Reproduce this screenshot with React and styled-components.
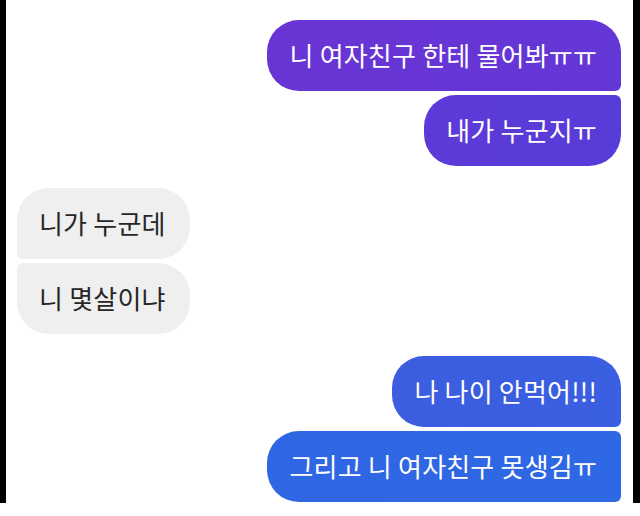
import React from "react";
import styled, { createGlobalStyle } from "styled-components";

const GlobalStyle = createGlobalStyle`
  html, body {
    margin: 0;
    padding: 0;
    background: #fff;
  }
  body {
    font-family: "Noto Sans CJK KR", "Noto Sans", sans-serif;
  }
`;

const Frame = styled.div`
  width: 640px;
  height: 516px;
  box-sizing: border-box;
  background: #fff;
  padding-bottom: 13px;
`;

const Screen = styled.div`
  height: 503px;
  box-sizing: border-box;
  border-left: 6px solid #000;
  border-right: 7px solid #000;
  padding-top: 20px;
  display: flex;
  flex-direction: column;
  gap: 22px;
  overflow: hidden;
`;

const Group = styled.div`
  display: flex;
  flex-direction: column;
  gap: 4px;
  align-items: ${(p) => (p.$mine ? "flex-end" : "flex-start")};
  padding: ${(p) => (p.$mine ? "0 12px 0 0" : "0 0 0 11px")};
`;

const radius = (mine, pos) => {
  const big = "32px";
  const small = "6px";
  if (mine) {
    const tr = pos === "first" ? big : small;
    const br = pos === "last" ? big : small;
    return `${big} ${tr} ${br} ${big}`;
  }
  const tl = pos === "first" ? big : small;
  const bl = pos === "last" ? big : small;
  return `${tl} ${big} ${big} ${bl}`;
};

const Bubble = styled.div`
  height: 71px;
  box-sizing: border-box;
  display: flex;
  align-items: center;
  padding: 0 24px 2px 22px;
  font-size: 26px;
  letter-spacing: 0.2px;
  white-space: nowrap;
  color: ${(p) => (p.$mine ? "#fff" : "#262626")};
  background: ${(p) => p.$bg};
  border-radius: ${(p) => radius(p.$mine, p.$pos)};
`;

// the last group continues below the cropped screen
const groups = [
  {
    mine: true,
    msgs: [
      { text: "니 여자친구 한테 물어봐ㅠㅠ", bg: "linear-gradient(90deg, #6a34d4, #6337d6)" },
      { text: "내가 누군지ㅠ", bg: "linear-gradient(90deg, #5d3ad7, #583cd8)" },
    ],
  },
  {
    mine: false,
    msgs: [
      { text: "니가 누군데", bg: "#efefef" },
      { text: "니 몇살이냐", bg: "#efefef" },
    ],
  },
  {
    mine: true,
    continues: true,
    msgs: [
      { text: "나 나이 안먹어!!!", bg: "linear-gradient(90deg, #3c5ddf, #3a5fe0)" },
      { text: "그리고 니 여자친구 못생김ㅠ", bg: "linear-gradient(90deg, #2f66e3, #2f68e4)" },
    ],
  },
];

const posOf = (g, j) => {
  if (j === 0) return "first";
  if (j === g.msgs.length - 1 && !g.continues) return "last";
  return "mid";
};

const App = () => {
  return (
    <Frame>
      <GlobalStyle />
      <Screen>
        {groups.map((g, i) => (
          <Group key={i} $mine={g.mine}>
            {g.msgs.map((m, j) => (
              <Bubble key={j} $mine={g.mine} $bg={m.bg} $pos={posOf(g, j)}>
                {m.text}
              </Bubble>
            ))}
          </Group>
        ))}
      </Screen>
    </Frame>
  );
};

export default App;
